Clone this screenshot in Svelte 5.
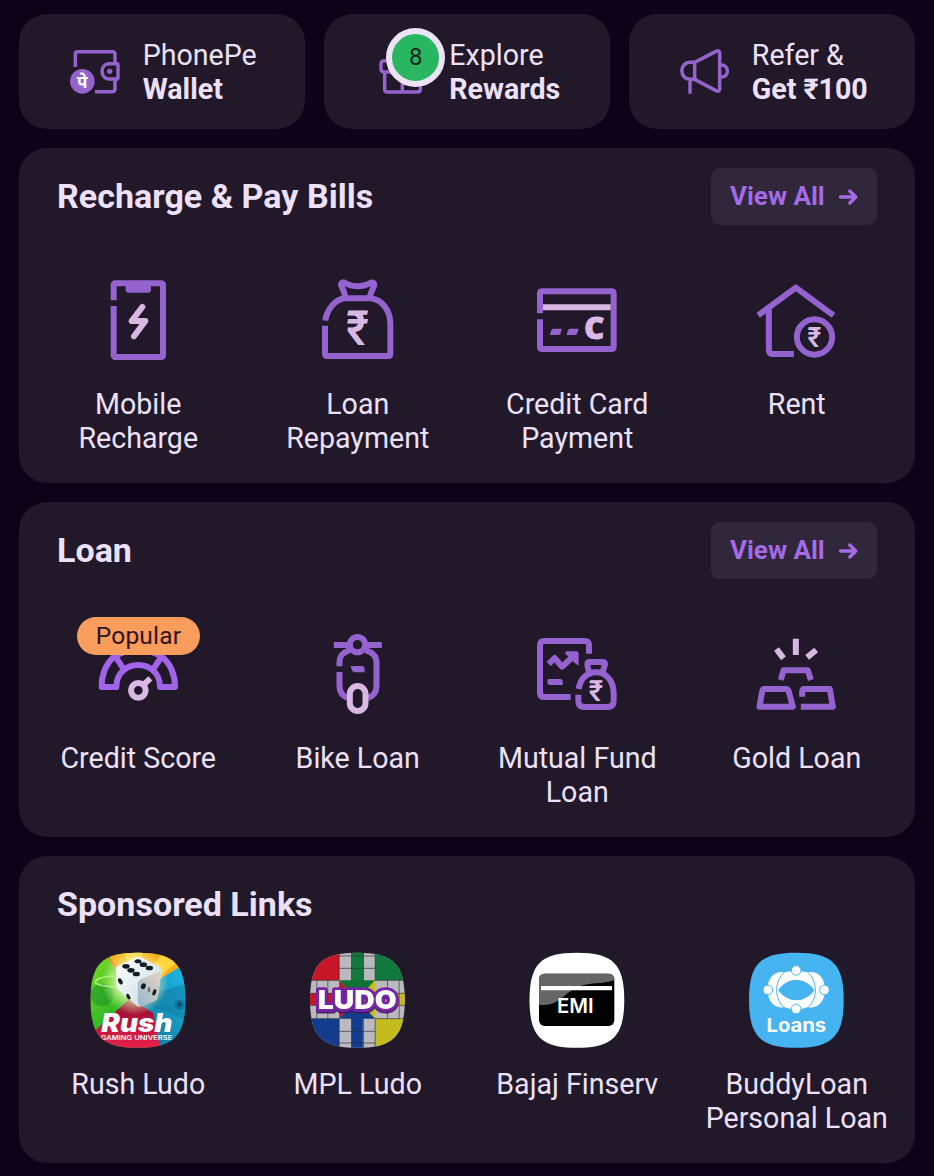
<script>
  const bills = [
    { icon: 'mobile', label: ['Mobile', 'Recharge'] },
    { icon: 'bag', label: ['Loan', 'Repayment'] },
    { icon: 'card', label: ['Credit Card', 'Payment'] },
    { icon: 'rent', label: ['Rent'] }
  ];
  const loans = [
    { icon: 'score', label: ['Credit Score'], tag: 'Popular' },
    { icon: 'bike', label: ['Bike Loan'] },
    { icon: 'fund', label: ['Mutual Fund', 'Loan'] },
    { icon: 'gold', label: ['Gold Loan'] }
  ];
  const sponsored = [
    { icon: 'rush', label: ['Rush Ludo'] },
    { icon: 'mpl', label: ['MPL Ludo'] },
    { icon: 'bajaj', label: ['Bajaj Finserv'] },
    { icon: 'buddy', label: ['BuddyLoan', 'Personal Loan'] }
  ];
</script>

{#snippet rupee(x, y, w, size)}
  <text class="rupee" {x} {y} font-size={size} textLength={w} lengthAdjust="spacingAndGlyphs">₹</text>
{/snippet}

{#snippet icon(name)}
  {#if name === 'mobile'}
    <svg class="ico" viewBox="24 60 240 240">
      <path d="M71 121V76q0-6 6-6H213q6 0 6 6V285q0 6-6 6H77q-6 0-6-6V138" />
      <path class="solid" d="M107 72h76v17q0 9-9 9h-57q-10 0-10-9z" />
      <path class="pink round" d="M157 141L125 183L166 183L132 229" />
    </svg>
  {:else if name === 'bag'}
    <svg class="ico" viewBox="682 60 240 240">
      <path d="M707 182C711 148 738 117 767 115H842C877 118 902 151 902 191V282q0 6-6 6H713q-7 0-7-7V197" />
      <path d="M767 114C766 97 757 84 754 75q-1-8 8-8C785 82 819 83 844 68q10-2 10 7C850 89 840 101 841 114" />
      {@render rupee(770, 254, 68, 146)}
    </svg>
  {:else if name === 'card'}
    <svg class="ico" viewBox="51 60 240 240">
      <path d="M60 160V101q0-7 7-7H274q7 0 7 7V260q0 7-7 7H67q-7 0-7-7V178" />
      <path class="pink" d="M69 142H272" />
      <path class="solid" d="M98 206h28l-5 16q-2 3-5 3H90q3-16 8-19zM148 206h28l-5 16q-2 3-5 3H140q3-16 8-19z" />
      <text class="letter" x="193" y="238" font-size="90" textLength="60" lengthAdjust="spacingAndGlyphs">C</text>
    </svg>
  {:else if name === 'rent'}
    <svg class="ico" viewBox="709.5 60 240 240">
      <path d="M716 166L829 83L942 166" />
      <path d="M748 145V269q0 13 13 13H823" />
      <circle cx="885" cy="231" r="53" />
      {@render rupee(864, 260, 41, 84)}
    </svg>
  {:else if name === 'score'}
    <svg class="ico bright" viewBox="114 102 240 240">
      <path d="M169 261H125C124 227 137 191 163 170C205 143 263 143 305 170C332 191 346 227 345 261H300C300 173 169 173 169 261Z" />
      <path d="M168 172L190 206M303 172L281 206" />
      <circle class="pink" cx="235" cy="271" r="22" />
      <path class="pink" d="M249 256L271 235" />
    </svg>
  {:else if name === 'bike'}
    <svg class="ico" viewBox="771.5 102 240 240">
      <path d="M822 135H863M923 135H966" />
      <circle cx="893" cy="134" r="23" />
      <path d="M839 199V185C840 165 851 157 868 151M918 151C938 157 950 167 950 187V258Q950 284 925 294M863 294Q839 284 839 258V216" />
      <path class="solid" d="M872 198h35q7 0 7 7v12h-26q-10 0-12-8z" />
      <rect class="pink" x="870" y="258" width="47" height="75" rx="23.5" />
    </svg>
  {:else if name === 'fund'}
    <svg class="ico" viewBox="51 42 240 240">
      <path d="M152 231H73q-13 0-13-13V76q0-13 13-13H194q13 0 13 13V101" />
      <path d="M86 132L104 114L126 140L162 107" />
      <path class="solid" d="M141 94h28q7 0 7 7v36l-13-9-28-28q0-6 6-6zM83 177h37q8 0 8 8v10H91q-9 0-9-9z" />
      <path d="M207 156Q203 142 202 132Q202 126 211 126H248Q256 126 255 133L248 156M176 207C180 179 196 162 221 157H236C266 163 281 190 281 222V243Q281 261 262 261H193Q175 261 175 243V224" />
      {@render rupee(206, 244, 43, 88)}
    </svg>
  {:else if name === 'gold'}
    <svg class="ico" viewBox="709.5 42 240 240">
      <path d="M784 180L792 151H865L874 180" />
      <path d="M734 207H798Q806 207 808 215L820 260H720L728 214Q730 207 734 207Z" />
      <path d="M848 230V215Q848 207 855 207H931L940 260H844" />
      <path class="pink" d="M829 56V105M771 87L792 115M890 90L863 112" />
    </svg>
  {:else if name === 'rush'}
    <svg class="app" viewBox="30 36 288 288">
      <defs>
        <linearGradient id="blue" x1="1" y1="0" x2="0" y2="1"><stop offset="0" stop-color="#20bde9" /><stop offset="1" stop-color="#08668e" /></linearGradient>
        <linearGradient id="red" x1="0" y1="0" x2="0" y2="1"><stop offset="0" stop-color="#8e0a31" /><stop offset="1" stop-color="#e81f48" /></linearGradient>
        <linearGradient id="green" x1="0" y1="0" x2="1" y2="1"><stop offset="0" stop-color="#82dd28" /><stop offset=".5" stop-color="#27b324" /><stop offset="1" stop-color="#0b7b20" /></linearGradient>
        <linearGradient id="die" x1="0" y1="0" x2="1" y2="1"><stop offset="0" stop-color="#ffffff" /><stop offset="1" stop-color="#c5d9df" /></linearGradient>
        <linearGradient id="dieside" x1="0" y1="1" x2="1" y2="0"><stop offset="0" stop-color="#91b8ce" /><stop offset="1" stop-color="#ead2c4" /></linearGradient>
        <radialGradient id="glow"><stop offset=".5" stop-color="#e9ffb0" stop-opacity=".8" /><stop offset="1" stop-color="#e9ffb0" stop-opacity="0" /></radialGradient>
      </defs>
      <rect x="30" y="36" width="288" height="288" fill="url(#green)" />
      <path d="M80 36H318V80L246 116L150 150Z" fill="#ffad19" />
      <path d="M135 36H190L175 80L145 95ZM250 36L300 60L235 112L225 70Z" fill="#ffd53d" />
      <path d="M80 50L140 95L120 110Z" fill="#ff841f" />
      <path d="M318 70L150 170L235 324H318Z" fill="url(#blue)" />
      <path d="M318 130L165 180L318 240Z" fill="#10769e" opacity=".45" />
      <circle cx="66" cy="165" r="34" fill="#128b2b" opacity=".5" />
      <path d="M150 175L30 286V324H240L220 220Z" fill="url(#red)" />
      <circle cx="298" cy="194" r="15" fill="#0c5c82" opacity=".55" /><circle cx="298" cy="194" r="7" fill="#0a4f75" />
      <circle cx="165" cy="125" r="100" fill="url(#glow)" />
      <path d="M103 108C60 110 40 120 48 130Q62 139 112 141" fill="none" stroke="#c2ff94" stroke-width="5" opacity=".75" />
      <path d="M108 88Q104 83 113 78L166 53Q175 49 186 53L238 80Q247 86 243 101L234 170Q231 180 221 184L183 199Q175 202 166 194L116 150Q109 145 109 135Z" fill="url(#die)" />
      <path d="M174 128Q176 121 184 118L242 93L234 170Q231 180 221 184L183 199Q174 196 173 183Z" fill="url(#dieside)" />
      <g fill="#101c22">
        <ellipse cx="138" cy="79" rx="11" ry="7" /><ellipse cx="153" cy="91" rx="11" ry="7" /><ellipse cx="169" cy="102" rx="11" ry="7" />
        <ellipse cx="174" cy="64" rx="10" ry="6" /><ellipse cx="190" cy="74" rx="11" ry="7" /><ellipse cx="208" cy="84" rx="11" ry="7" />
        <ellipse cx="121" cy="124" rx="6" ry="10" transform="rotate(-28 121 124)" /><ellipse cx="145" cy="170" rx="5" ry="9" transform="rotate(-28 145 170)" />
        <ellipse cx="190" cy="139" rx="7" ry="9" transform="rotate(25 190 139)" /><ellipse cx="207" cy="149" rx="4" ry="9" fill="#806e6a" /><ellipse cx="223" cy="157" rx="5" ry="10" transform="rotate(20 223 157)" />
      </g>
      <text class="rush" x="64" y="275" textLength="213" lengthAdjust="spacingAndGlyphs">Rush</text>
      <text class="uni" x="62" y="299" textLength="215" lengthAdjust="spacingAndGlyphs">GAMING UNIVERSE</text>
    </svg>
  {:else if name === 'mpl'}
    <svg class="app" viewBox="28.5 36 288 288">
      <rect x="28" y="36" width="290" height="288" fill="#b9b9be" />
      <path d="M28 36H119V121H28Z" fill="#c71726" />
      <path d="M227 36H318V121H227ZM156 36H192V142H156Z" fill="#11793d" />
      <path d="M28 236H119V324H28ZM156 220H190V324H156Z" fill="#123d8e" />
      <path d="M227 236H318V324H227ZM227 160H318V196H227Z" fill="#c4bc1e" />
      <path d="M28 160H119V196H28Z" fill="#c71726" />
      <path d="M119 121L173 179L119 236Z" fill="#b9142a" /><path d="M119 121H227L173 179Z" fill="#107336" />
      <path d="M227 121L173 179L227 236Z" fill="#c7bf18" /><path d="M119 236L173 179L227 236Z" fill="#153e8a" />
      <path d="M119 36V121M119 236V324M156 36V121M192 36V121M156 236V324M192 236V324M227 36V121M227 236V324M28 121H119M227 121H318M28 160H119M28 196H119M227 160H318M227 196H318M28 236H119M227 236H318M119 48H227M119 85H227M119 274H227M119 309H227M52 121V236M85 121V236M264 121V236M299 121V236" stroke="#303139" stroke-width="2" />
      <text class="ludo" x="55" y="207" textLength="237" lengthAdjust="spacingAndGlyphs">LUDO</text>
    </svg>
  {:else if name === 'bajaj'}
    <svg class="app" viewBox="27 36 288 288">
      <rect x="27" y="36" width="288" height="288" fill="#fff" />
      <rect x="57" y="101" width="226" height="157" rx="17" fill="#000" />
      <path d="M57 190V118Q57 101 74 101H266Q283 101 283 120C248 134 205 125 173 142C131 158 116 203 57 194Z" fill="#666" />
      <rect x="63" y="138" width="213" height="13" rx="2" fill="#fff" />
      <text class="emi" x="111" y="220" textLength="110" lengthAdjust="spacingAndGlyphs">EMI</text>
    </svg>
  {:else}
    <svg class="app" viewBox="40.5 36 288 288">
      <rect x="40" y="36" width="289" height="288" fill="#45b4f1" />
      <path fill="#fff" fill-rule="evenodd" d="M151 97Q185 88 218 97C253 91 271 115 271 149C271 183 253 206 218 202Q185 216 151 202C119 206 99 183 99 149C99 115 119 92 151 97ZM131 151C159 109 211 109 240 151C211 191 160 191 131 151Z" />
      <path d="M151 95C118 122 118 180 152 205M218 95C251 122 251 180 217 205" fill="none" stroke="#45b4f1" stroke-width="3" />
      <g fill="#fff" stroke="#45b4f1" stroke-width="3"><circle cx="185" cy="91" r="14.5" /><circle cx="185" cy="207" r="14.5" /><circle cx="100" cy="150" r="14.5" /><circle cx="270" cy="150" r="14.5" /></g>
      <text class="loans" x="96" y="277" textLength="179" lengthAdjust="spacingAndGlyphs">Loans</text>
    </svg>
  {/if}
{/snippet}

{#snippet tiles(items)}
  {#each items as item}
    <div class="tile">
      {@render icon(item.icon)}
      {#if item.tag}<span class="tag">{item.tag}</span>{/if}
      <div class="label">{#each item.label as line}<div>{line}</div>{/each}</div>
    </div>
  {/each}
{/snippet}

{#snippet viewAll()}
  <button class="view">
    View All
    <svg width="19" height="18" viewBox="0 0 19 18"><path d="M1.5 9H16.5M10.8 3L16.8 9L10.8 15" /></svg>
  </button>
{/snippet}

<main>
  <div class="quick">
    <div class="pill">
      <div class="glyph">
        <svg viewBox="189 144 144 144">
          <path d="M196 201V161Q196 155 203 155H307Q315 155 315 163V188M315 239V267Q315 275 307 275H255" />
          <path d="M321 191H298C269 191 269 237 298 237H321Q324 237 324 232V196Q324 191 321 191Z" />
          <circle class="dot" cx="299" cy="214" r="8" />
          <circle class="dot" cx="217" cy="244" r="37" />
          <text class="pe" x="217" y="263" text-anchor="middle">पे</text>
        </svg>
      </div>
      <div class="words"><span>PhonePe</span><b>Wallet</b></div>
    </div>
    <div class="pill">
      <div class="glyph">
        <svg viewBox="174 144 144 144">
          <path d="M191 182H297Q309 182 309 192V206Q309 216 298 216H190Q180 216 180 207V192Q180 182 191 182ZM191 216V268Q191 276 199 276H290Q298 276 298 268V216M244 182V276" />
        </svg>
        <span class="badge">8</span>
      </div>
      <div class="words"><span>Explore</span><b>Rewards</b></div>
    </div>
    <div class="pill">
      <div class="glyph">
        <svg viewBox="186 144 144 144">
          <path d="M224 187L288 154Q299 149 299 160V266Q299 277 288 272L224 238ZM224 187H211C177 187 177 238 211 238H224M210 238V281M302 195C329 192 329 235 302 231" />
        </svg>
      </div>
      <div class="words"><span>Refer &amp;</span><b>Get ₹100</b></div>
    </div>
  </div>

  <section class="main-panel">
    <header><h2>Recharge &amp; Pay Bills</h2>{@render viewAll()}</header>
    <div class="tiles">{@render tiles(bills)}</div>
  </section>
  <section class="main-panel">
    <header><h2>Loan</h2>{@render viewAll()}</header>
    <div class="tiles">{@render tiles(loans)}</div>
  </section>
  <section class="links">
    <header><h2>Sponsored Links</h2></header>
    <div class="tiles">{@render tiles(sponsored)}</div>
  </section>
</main>

<style>
  :global(body) { background: #0d0218; }
  main {
    box-sizing: border-box;
    height: 1176px;
    padding: 14px 19px 0;
    display: flex;
    flex-direction: column;
    gap: 19px;
    overflow: hidden;
    background: #0d0218;
    color: #ede1fa;
    font-family: Roboto, 'Noto Sans', sans-serif;
  }
  .quick { display: grid; grid-template-columns: repeat(3, 1fr); gap: 19px; height: 115px; }
  .pill {
    display: flex; align-items: center; justify-content: center; gap: 22px;
    box-sizing: border-box; padding-left: 5.5px;
    background: #21182a; border-radius: 28px;
  }
  .glyph { position: relative; width: 48px; height: 48px; }
  .glyph svg { display: block; width: 48px; height: 48px; overflow: visible; }
  .glyph path { fill: none; stroke: #9563cc; stroke-width: 10.5; stroke-linejoin: round; }
  .glyph .dot { fill: #9563cc; }
  .pe { fill: #fff; font: 700 51px 'Noto Sans', sans-serif; }
  .badge {
    position: absolute; left: 7px; top: -19.5px; box-sizing: border-box;
    width: 59px; height: 59px; border: 6.5px solid #ede3f7; border-radius: 50%;
    background: #29b661; color: #17251f; font-size: 24px; line-height: 47px; text-align: center;
  }
  .words { display: flex; flex-direction: column; padding-top: 2px; font-size: 28.6px; line-height: 33.5px; white-space: nowrap; }
  .words b { font-weight: 700; }
  section { box-sizing: border-box; background: #21182a; border-radius: 28px; }
  .main-panel { height: 335px; }
  .links { height: 307px; }
  header { display: flex; justify-content: space-between; align-items: center; height: 57px; padding: 20px 38px 0; }
  h2 { margin: 0; padding-bottom: 2px; font-size: 34px; line-height: 40px; font-weight: 700; letter-spacing: .03px; }
  .view {
    display: flex; align-items: center; justify-content: space-between;
    width: 166px; height: 57px; padding: 0 19px 2px 19px; border: 0; border-radius: 9px;
    background: #30273a; color: #a56ae5; font: 700 26px/30px Roboto, sans-serif; white-space: nowrap;
  }
  .view svg { margin-top: 2px; }
  .view path { fill: none; stroke: #a56ae5; stroke-width: 3.3; stroke-linecap: round; stroke-linejoin: round; }
  .tiles { display: grid; grid-template-columns: repeat(4, 1fr); padding: 55px 9px 0; }
  .links .tiles { padding-top: 19px; }
  .tile { position: relative; display: flex; flex-direction: column; align-items: center; gap: 27px; }
  .links .tile { gap: 19px; }
  .label { padding-left: 1px; font-size: 28.6px; line-height: 34px; text-align: center; white-space: nowrap; }
  .tag {
    position: absolute; top: -17px; left: 49px; width: 123px; height: 38px; border-radius: 19px;
    background: #f89d5c; color: #2f1322; font-size: 24.5px; line-height: 38px; letter-spacing: .2px; text-align: center;
  }
  .ico { width: 80px; height: 80px; overflow: visible; }
  .ico path, .ico circle, .ico rect { fill: none; stroke: #9563cf; stroke-width: 18; stroke-linejoin: round; }
  .ico .solid { fill: #9563cf; stroke: none; }
  .ico .round { stroke-linecap: round; }
  .ico.bright path, .ico.bright circle { stroke: #a163e8; }
  .ico .pink, .ico.bright .pink { stroke: #d9b8e4; }
  .rupee { fill: #d9b8e4; font-family: Roboto, sans-serif; font-weight: 600; }
  .letter { fill: #d9b8e4; stroke: #d9b8e4; stroke-width: 3; font-family: 'Open Sans', sans-serif; font-weight: 800; }
  .app { width: 96px; height: 96px; clip-path: path('M.8 48C.8 12 12 .7 48 .7S95.5 12 95.5 48 84 95.8 48 95.8 .8 84 .8 48Z'); }
  .rush { fill: #fff; font: italic 900 76px Inter, Roboto, sans-serif; }
  .uni { fill: #fff; font: 600 17px Inter, sans-serif; }
  .ludo {
    fill: #fff; stroke: #7426a7; stroke-width: 17; paint-order: stroke; stroke-linejoin: round;
    font: 900 78px Inter, Roboto, sans-serif; filter: drop-shadow(0 5px 1px #431469);
  }
  .emi { fill: #fff; font: 600 59px Inter, sans-serif; }
  .loans { fill: #fff; font: 700 56px Inter, sans-serif; }
</style>
